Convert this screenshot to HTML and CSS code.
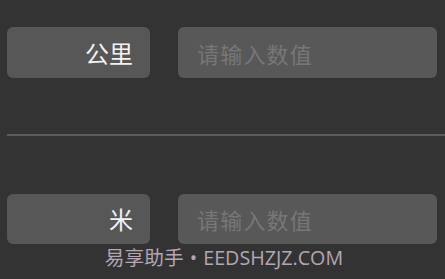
FILE: index.html
```html
<!DOCTYPE html>
<html lang="zh">
<head>
<meta charset="utf-8">
<link rel="stylesheet" href="styles.css">
</head>
<body>
<div class="page">
  <div class="row row-top">
    <div class="unit">公里</div>
    <div class="field">请输入数值</div>
  </div>
  <div class="divider"></div>
  <div class="row row-bottom">
    <div class="unit">米</div>
    <div class="field">请输入数值</div>
  </div>
  <div class="watermark">易享助手 • EEDSHZJZ.COM</div>
</div>
</body>
</html>
```

FILE: styles.css
```css
html, body {
  margin: 0;
  padding: 0;
  background: #333333;
}
body {
  width: 445px;
  height: 279px;
  overflow: hidden;
  font-family: "Noto Sans CJK SC", "Noto Sans", sans-serif;
}
.page {
  display: flex;
  flex-direction: column;
  padding: 27px 8px 0 7px;
}
.row {
  display: flex;
  gap: 28px;
  height: 51px;
}
.row-bottom {
  height: 50px;
}
.unit {
  width: 143px;
  background: #575757;
  border-radius: 6px;
  display: flex;
  align-items: center;
  justify-content: flex-end;
  padding-right: 17px;
  box-sizing: border-box;
  color: #f2f2f2;
  font-size: 24px;
  line-height: 1;
}
.field {
  flex: 1;
  background: #585858;
  border-radius: 6px;
  display: flex;
  align-items: center;
  padding-left: 19px;
  color: #777777;
  font-size: 22px;
  letter-spacing: 1.2px;
  line-height: 1;
}
.divider {
  height: 2px;
  background: #5c5c5c;
  margin: 56px -8px 58px 0;
}
.watermark {
  margin-top: 1px;
  text-align: center;
  color: #b4a6b6;
  font-family: "Open Sans", "Noto Sans CJK SC", sans-serif;
  font-size: 19.7px;
  word-spacing: 1px;
  line-height: 26px;
  padding-left: 4px;
}
```
